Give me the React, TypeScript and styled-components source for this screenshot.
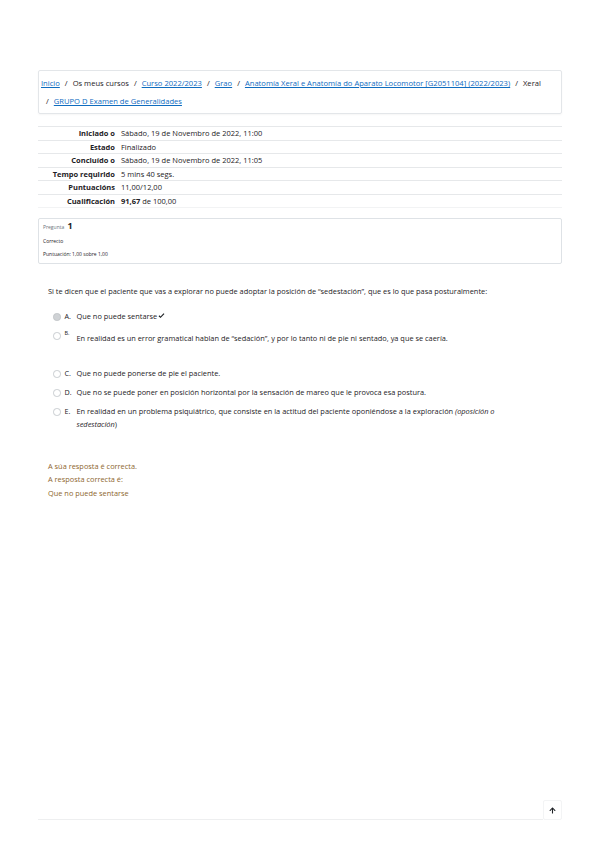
import * as React from 'react';
import styled, { createGlobalStyle } from 'styled-components';
import { FaArrowUp } from 'react-icons/fa';

const GlobalStyle = createGlobalStyle`
  html, body {
    margin: 0;
    padding: 0;
    background: #ffffff;
  }
  body {
    font-family: "Open Sans", "Noto Sans", sans-serif;
    color: #1d2125;
  }
`;

const summaryRows = [
  { label: 'Iniciado o', value: 'Sábado, 19 de Novembro de 2022, 11:00' },
  { label: 'Estado', value: 'Finalizado' },
  { label: 'Concluído o', value: 'Sábado, 19 de Novembro de 2022, 11:05' },
  { label: 'Tempo requirido', value: '5 mins 40 segs.' },
  { label: 'Puntuacións', value: '11,00/12,00' },
];

interface OptionData {
  letter: string;
  text: string;
  checked?: boolean;
  correct?: boolean;
  shifted?: boolean;
  italic?: string[];
}

const options: OptionData[] = [
  { letter: 'A.', text: 'Que no puede sentarse', checked: true, correct: true },
  {
    letter: 'B.',
    text: 'En realidad es un error gramatical hablan de “sedación”, y por lo tanto ni de pie ni sentado, ya que se caería.',
    shifted: true,
  },
  { letter: 'C.', text: 'Que no puede ponerse de pie el paciente.' },
  {
    letter: 'D.',
    text: 'Que no se puede poner en posición horizontal por la sensación de mareo que le provoca esa postura.',
  },
  {
    letter: 'E.',
    text: 'En realidad en un problema psiquiátrico, que consiste en la actitud del paciente oponiéndose a la exploración ',
    italic: ['(oposición o', 'sedestación'],
  },
];

const Page = styled.div`
  padding: 70px 37px 20px 38px;
`;

const Breadcrumb = styled.nav`
  border: 1px solid #e3e6e9;
  border-radius: 2px;
  box-shadow: 0 1px 2px rgba(0, 0, 0, 0.04);
  padding: 3px 3px 3px 2px;
`;

const Crumbs = styled.ol`
  list-style: none;
  margin: 0;
  padding: 0;
  max-width: 510px;
  display: flex;
  flex-wrap: wrap;
  font-size: 7.6px;
  line-height: 18px;
`;

const Crumb = styled.li`
  & + &::before {
    content: '/';
    padding: 0 5px;
    color: #1d2125;
  }
`;

const CrumbLink = styled.a`
  color: #0f6cbf;
  text-decoration: underline;
`;

const Summary = styled.table`
  width: 100%;
  margin-top: 12px;
  border-collapse: collapse;
  font-size: 7.5px;
`;

const Row = styled.tr`
  border-top: 1px solid #e6e8ea;
  height: 13.5px;
  &:last-child {
    border-bottom: 1px solid #f2f3f4;
  }
`;

const Label = styled.th`
  width: 77px;
  text-align: right;
  font-weight: 700;
  padding: 0 6px 0 0;
  white-space: nowrap;
  line-height: 12.5px;
`;

const Value = styled.td`
  padding: 0;
  line-height: 12.5px;
`;

const Info = styled.div`
  margin-top: 10px;
  border: 1px solid #dee2e6;
  border-radius: 2px;
  padding: 2px 4px 1px;
  font-size: 5px;
  line-height: 13.5px;
`;

const Number = styled.div`
  color: #6a737b;
  height: 13.5px;
  strong {
    color: #1d2125;
    font-size: 9px;
    line-height: 1;
    font-weight: 700;
    margin-left: 2px;
  }
`;

const Content = styled.div`
  padding: 0 30px 0 10px;
  font-size: 7.4px;
`;

const QText = styled.p`
  margin: 21px 0 0;
  line-height: 13px;
`;

const Options = styled.div`
  margin-top: 9px;
  padding-left: 5px;
`;

const Option = styled.div<{ $tall?: boolean }>`
  display: flex;
  align-items: flex-start;
  padding: 3px 0;
  line-height: 13px;
  margin-bottom: ${(p) => (p.$tall ? '16px' : '0')};
`;

const Radio = styled.span<{ $checked?: boolean }>`
  flex: none;
  width: 5.5px;
  height: 5.5px;
  margin: 3.5px 4px 0 0;
  border-radius: 50%;
  border: 0.8px solid ${(p) => (p.$checked ? '#c3c6c9' : '#c8ccd0')};
  background: ${(p) => (p.$checked ? '#cfd2d5' : '#ffffff')};
`;

const Letter = styled.span<{ $up?: boolean }>`
  flex: none;
  width: 12px;
  font-size: ${(p) => (p.$up ? '5.5px' : '7.2px')};
  line-height: ${(p) => (p.$up ? '8px' : '13px')};
`;

const OptionText = styled.span<{ $down?: boolean }>`
  flex: 1;
  padding-top: ${(p) => (p.$down ? '3px' : '0')};
  em {
    font-style: italic;
  }
`;

const Check = styled.svg`
  width: 7px;
  height: 6px;
  margin-left: 0.5px;
  vertical-align: -0.5px;
`;

const Feedback = styled.div`
  margin-top: 26px;
  color: #8e662e;
  line-height: 13.5px;
`;

const Footer = styled.div`
  margin-top: 300px;
  display: flex;
  align-items: flex-end;
`;

const Rule = styled.div`
  flex: 1;
  height: 1px;
  background: #eeeff0;
`;

const TopButton = styled.button`
  width: 19px;
  height: 20px;
  padding: 0;
  border: 1px solid #f3f4f5;
  border-radius: 2px;
  background: #ffffff;
  color: #1d2125;
  display: flex;
  align-items: center;
  justify-content: center;
`;

const App = () => (
  <Page>
    <GlobalStyle />
    <Breadcrumb>
      <Crumbs>
        <Crumb>
          <CrumbLink>Inicio</CrumbLink>
        </Crumb>
        <Crumb>Os meus cursos</Crumb>
        <Crumb>
          <CrumbLink>Curso 2022/2023</CrumbLink>
        </Crumb>
        <Crumb>
          <CrumbLink>Grao</CrumbLink>
        </Crumb>
        <Crumb>
          <CrumbLink>Anatomía Xeral e Anatomía do Aparato Locomotor [G2051104] (2022/2023)</CrumbLink>
        </Crumb>
        <Crumb>Xeral</Crumb>
        <Crumb>
          <CrumbLink>GRUPO D Examen de Generalidades</CrumbLink>
        </Crumb>
      </Crumbs>
    </Breadcrumb>

    <Summary>
      <tbody>
        {summaryRows.map((r) => (
          <Row key={r.label}>
            <Label>{r.label}</Label>
            <Value>{r.value}</Value>
          </Row>
        ))}
        <Row>
          <Label>Cualificación</Label>
          <Value>
            <b>91,67</b> de 100,00
          </Value>
        </Row>
      </tbody>
    </Summary>

    <Info>
      <Number>
        Pregunta <strong>1</strong>
      </Number>
      <div>Correcto</div>
      <div>Puntuación: 1,00 sobre 1,00</div>
    </Info>

    <Content>
      <QText>
        Si te dicen que el paciente que vas a explorar no puede adoptar la posición de “sedestación”, que es lo que
        pasa posturalmente:
      </QText>
      <Options>
        {options.map((o) => (
          <Option key={o.letter} $tall={o.shifted}>
            <Radio $checked={o.checked} />
            <Letter $up={o.shifted}>{o.letter}</Letter>
            <OptionText $down={o.shifted}>
              {o.text}
              {o.italic && (
                <>
                  <em>{o.italic[0]}</em> <em>{o.italic[1]}</em>)
                </>
              )}
              {o.correct && (
                <Check viewBox="0 0 10 8">
                  <path d="M0.8 4.2 L3.6 7 L9.2 1.2 L8 0.2 L3.6 4.6 L2 3 Z" fill="#1d2125" />
                </Check>
              )}
            </OptionText>
          </Option>
        ))}
      </Options>

      <Feedback>
        <div>A súa resposta é correcta.</div>
        <div>A resposta correcta é:</div>
        <div>Que no puede sentarse</div>
      </Feedback>
    </Content>

    <Footer>
      <Rule />
      <TopButton aria-label="Volver arriba">
        <FaArrowUp size={7} />
      </TopButton>
    </Footer>
  </Page>
);

export default App;
